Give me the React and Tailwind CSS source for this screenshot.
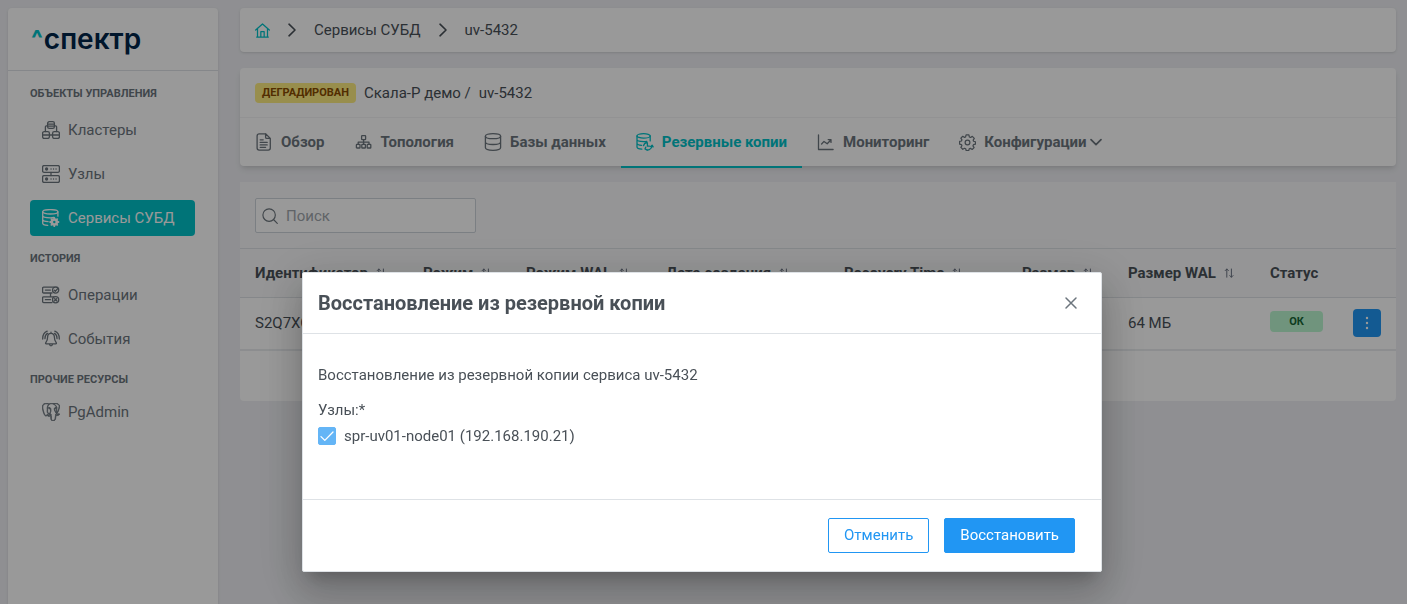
import React, { useState } from 'react';
import { SiPostgresql } from 'react-icons/si';

const Icon = ({ children, box = 18, className = 'size-[18px]' }) => (
  <svg
    viewBox={`0 0 ${box} ${box}`}
    className={`${className} shrink-0`}
    fill="none"
    stroke="currentColor"
    strokeWidth="1.3"
    strokeLinecap="round"
    strokeLinejoin="round"
    aria-hidden="true"
  >
    {children}
  </svg>
);

const ClusterIcon = () => (
  <Icon>
    <rect x="5.6" y="0.7" width="6.8" height="6.6" rx="1.6" />
    <path d="M5.6 3.2h6.8M5.6 5.2h6.8" />
    <rect x="0.6" y="10.6" width="6.8" height="6.8" rx="1.6" />
    <rect x="10.6" y="10.6" width="6.8" height="6.8" rx="1.6" />
    <path d="M0.6 14h16.8M5.6 4.8H4.4c-.8 0-1 .5-1 1v4.8M12.4 4.8h1.2c.8 0 1 .5 1 1v4.8" />
  </Icon>
);

const NodesIcon = () => (
  <Icon>
    <rect x="0.6" y="0.6" width="16.8" height="6.8" rx="1.4" />
    <rect x="0.6" y="10.6" width="16.8" height="6.8" rx="1.4" />
    <path d="M9 7.4v3.2M9 4h.1M11.5 4h.1M14 4h.1M9 14h.1M11.5 14h.1M14 14h.1" />
    <circle cx="4.6" cy="4" r="1" fill="currentColor" />
    <circle cx="4.6" cy="14" r="1" fill="currentColor" />
  </Icon>
);

const ServiceIcon = () => (
  <Icon>
    <ellipse cx="8.3" cy="2.8" rx="7.6" ry="2.2" />
    <path d="M.7 2.8v11.4c0 1.2 2 2 5 2.2M15.9 2.8v4.4M.7 6.6c0 1.3 3.3 2.2 7.6 2.2 1.4 0 2.6-.1 3.7-.3M.7 10.4c0 1.2 2.2 2 5.4 2.2" />
    <circle cx="12.3" cy="13" r="2.5" strokeWidth="2.6" />
    <path
      d="M12.3 8.8v1.6M12.3 15.6v1.6M8.1 13h1.6M14.9 13h1.6M9.4 10.1l1.1 1.1M14.1 14.8l1.1 1.1M9.4 15.9l1.1-1.1M14.1 11.2l1.1-1.1"
      strokeWidth="1.8"
    />
  </Icon>
);

const OperationsIcon = () => (
  <Icon>
    <path d="M10 7H1.6c-.6 0-1-.4-1-1V2.200c0-.6.4-1 1-1H12M10 16.600H1.600c-.6 0-1-.4-1-1v-3.800c0-.6.4-1 1-1H12M3.400 4.100h5M3.400 13.700h5M8.500 7v3.800" />
    <circle cx="13.6" cy="4.1" r="3.1" />
    <circle cx="13.6" cy="13.7" r="3.1" />
    <path d="M12.3 4.2l1 1 2.4-2.600M12.600 12.700l2 2M14.600 12.700l-2 2" />
  </Icon>
);

const EventsIcon = () => (
  <Icon>
    <path d="M9 3.4c-2.3 0-3.4 1.7-3.4 3.8 0 3.4-1.2 4.600-1.900 5.600-.3.500-.1 1 .5 1h9.600c.6 0 .8-.5.5-1-.7-1-1.900-2.200-1.900-5.600 0-2.100-1.100-3.800-3.400-3.800zM9 3.400V2.200M7.400 14c.2 1.200.8 1.800 1.600 1.800s1.400-.6 1.600-1.800" />
    <path d="M5.200 1.200C2.400 2.300.6 5 .7 9M5.400 3.400C3.700 4.400 2.900 6.200 3 8.600M12.800 1.200c2.800 1.100 4.600 3.800 4.500 7.800M12.600 3.400c1.700 1 2.500 2.800 2.400 5.200" />
  </Icon>
);

const DocIcon = () => (
  <Icon>
    <path d="M10.600.8H4.200C2.900.8 2.100 1.600 2.100 2.900v12.200c0 1.300.8 2.100 2.100 2.100h9c1.300 0 2.100-.8 2.100-2.100V5.400L10.600.8v3.400c0 .8.4 1.200 1.200 1.200h3.500M5.200 6.800h3M5.200 9.400h7M5.200 11.900h7M5.200 14.300h5.400" />
  </Icon>
);

const TopologyIcon = () => (
  <Icon>
    <rect x="6.6" y="2.6" width="4" height="4" rx=".6" />
    <rect x="1.4" y="11.4" width="3.6" height="3.6" rx=".6" />
    <rect x="6.8" y="11.4" width="3.6" height="3.6" rx=".6" />
    <rect x="12.2" y="11.4" width="3.6" height="3.6" rx=".6" />
    <path d="M8.6 6.6v4.8M3.2 11.4V9.2H14v2.2" />
  </Icon>
);

const DatabaseIcon = () => (
  <Icon>
    <ellipse cx="9" cy="3.2" rx="7.6" ry="2.5" />
    <path d="M1.4 3.2v11.4c0 1.500 3.300 2.700 7.600 2.700s7.600-1.200 7.600-2.700V3.200M1.400 9c0 1.400 3.300 2.500 7.600 2.500s7.600-1.100 7.600-2.500" />
  </Icon>
);

const BackupIcon = () => (
  <Icon>
    <ellipse cx="7.6" cy="2.9" rx="6.6" ry="2.2" />
    <path d="M1 2.900v11c0 1.200 2 2 4.800 2.200M14.200 2.900v5M1 6.600c0 1.200 2.800 2.100 6.600 2.100 1.200 0 2.300-.1 3.200-.3M1 10.200c0 1.100 1.900 1.900 4.700 2.100" />
    <path d="M7.600 12.600a4.100 4.100 0 0 1 3.600-3.100M16 12.800a4.200 4.200 0 0 1-6.800 3.200M11.400 10.200v3h2M14.500 13.600l1.600-1.500 1 1.800M11.200 17.300L9 16l.8-1.900" />
  </Icon>
);

const MonitoringIcon = () => (
  <Icon>
    <path d="M1.500 2v14.500h14.600M4.600 11l2.400-2.600 3.200 2.400 3.600-3.800M11.200 6.600h2.800v2.800" />
  </Icon>
);

const GearIcon = () => (
  <Icon className="size-[17px]">
    <circle cx="9" cy="9" r="2.5" />
    <path d="M7.500 1h3l.5 2.200 1.200.5 1.900-1.200 2.100 2.100L15 6.500l.4 1.200 2 .5v2.600l-2.100.5-.5 1.200 1.200 1.900-2.100 2-1.800-1.200-1.300.5-.5 1.900H7.600l-.5-2-1.200-.5L4 16.200l-2-2 1.100-1.800-.5-1.200-2-.5V7.900l2-.5.5-1.200L2 4.400l2-2 1.900 1.200 1.100-.5z" />
  </Icon>
);

const SearchIcon = () => (
  <Icon className="size-4">
    <circle cx="8" cy="8" r="7" />
    <path d="M13.2 13.2l4 4" />
  </Icon>
);

const HomeIcon = () => (
  <Icon className="size-[15px]">
    <path d="M.8 8.4L9 1.200l8.200 7.200M3 7v9.800h12V7M7 16.600V10.400h4v6.200M2 16.800h14" strokeWidth="1.5" />
  </Icon>
);

const ChevronRight = () => (
  <Icon box={14} className="size-3.5">
    <path d="M4 1.200L10 7l-6 5.800" strokeWidth="1.6" />
  </Icon>
);

const ChevronDown = () => (
  <Icon box={14} className="size-3.5">
    <path d="M2 4.600L7 9.600l5-5" strokeWidth="1.7" />
  </Icon>
);

const SortIcon = () => (
  <Icon box={10} className="size-2.5 text-gray-500">
    <path d="M2.800 9.200V1M1.200 2.600L2.800 1l1.600 1.600M7.400 1v8.200M5.800 7.600l1.600 1.600L9 7.600" strokeWidth="1" />
  </Icon>
);

const PgAdminIcon = () => (
  <SiPostgresql className="size-[18px] shrink-0 stroke-current stroke-1" aria-hidden="true" />
);

const menu = [
  {
    title: 'Объекты управления',
    items: [
      { label: 'Кластеры', icon: <ClusterIcon /> },
      { label: 'Узлы', icon: <NodesIcon /> },
      { label: 'Сервисы СУБД', icon: <ServiceIcon />, active: true },
    ],
  },
  {
    title: 'История',
    items: [
      { label: 'Операции', icon: <OperationsIcon /> },
      { label: 'События', icon: <EventsIcon /> },
    ],
  },
  {
    title: 'Прочие ресурсы',
    compact: true,
    items: [{ label: 'PgAdmin', icon: <PgAdminIcon /> }],
  },
];

const tabs = [
  { label: 'Обзор', icon: <DocIcon /> },
  { label: 'Топология', icon: <TopologyIcon /> },
  { label: 'Базы данных', icon: <DatabaseIcon /> },
  { label: 'Резервные копии', icon: <BackupIcon />, active: true },
  { label: 'Мониторинг', icon: <MonitoringIcon /> },
  { label: 'Конфигурации', icon: <GearIcon />, dropdown: true },
];

const columns = [
  { label: 'Идентификатор', width: 'w-[168px]' },
  { label: 'Режим', width: 'w-[103px]' },
  { label: 'Режим WAL', width: 'w-[140px]' },
  { label: 'Дата создания', width: 'w-[178px]' },
  { label: 'Recovery Time', width: 'w-[178px]' },
  { label: 'Размер', width: 'w-[106px]' },
  { label: 'Размер WAL', width: 'w-[142px]' },
];

const Sidebar = () => (
  <aside className="w-[210px] shrink-0 rounded-t bg-white shadow-sm">
    <a href="#" className="flex h-[63px] items-center gap-px border-b border-[#dee2e6] pl-[23px] font-['Inter',sans-serif]">
      <span className="text-2xl leading-8 font-extrabold text-[#00c2c9]">^</span>
      <span className="text-[28px] leading-8 font-semibold text-[#00254a]">спектр</span>
    </a>
    <nav className="flex flex-col gap-[11px] pt-[11px] pr-[23px] pl-[22px]">
      {menu.map((group) => (
        <div key={group.title}>
          <h2 className="py-1 text-[11px] leading-4 font-bold text-[#6c757d] uppercase">{group.title}</h2>
          <ul className={group.compact ? 'flex flex-col gap-2 pt-0.5' : 'flex flex-col gap-2 pt-1.5'}>
            {group.items.map((item) => (
              <li key={item.label}>
                <a
                  href="#"
                  className={
                    item.active
                      ? 'flex h-9 items-center gap-2 rounded bg-[#00c2c9] px-3 text-white'
                      : 'flex h-9 items-center gap-2 rounded px-3 text-[#6c757d]'
                  }
                >
                  {item.icon}
                  {item.label}
                </a>
              </li>
            ))}
          </ul>
        </div>
      ))}
    </nav>
  </aside>
);

const Breadcrumbs = () => (
  <nav className="flex h-11 items-center gap-[15px] rounded bg-white px-[15px] shadow-sm">
    <a href="#" aria-label="Главная" className="text-[#00c2c9]">
      <HomeIcon />
    </a>
    <ChevronRight />
    <a href="#">Сервисы СУБД</a>
    <ChevronRight />
    <span>uv-5432</span>
  </nav>
);

const ServiceHeader = () => (
  <section className="rounded bg-white shadow-md">
    <div className="flex h-[50px] items-center gap-2 border-b border-gray-100 px-[15px]">
      <span className="rounded bg-[#feed80] px-[7px] text-[11px] leading-5 font-bold text-[#894b00] uppercase">
        Деградирован
      </span>
      <span>Скала-Р демо /</span>
      <span>uv-5432</span>
    </div>
    <div className="flex h-12">
      {tabs.map((tab) => (
        <button
          key={tab.label}
          type="button"
          className={
            tab.active
              ? '-mb-0.5 flex items-center gap-2 border-b-2 border-[#00c2c9] px-[15px] font-bold whitespace-nowrap text-[#00c2c9]'
              : 'flex items-center gap-2 px-[15px] font-bold whitespace-nowrap text-[#6c757d]'
          }
        >
          {tab.icon}
          <span className="flex items-center gap-0.5">
            {tab.label}
            {tab.dropdown && <ChevronDown />}
          </span>
        </button>
      ))}
    </div>
  </section>
);

const BackupsTable = () => (
  <section>
    <div className="bg-[#f8f9fa] px-[15px] pt-4 pb-[15px]">
      <label className="flex h-[35px] w-[221px] items-center gap-2 rounded-xs border border-[#ced4da] bg-white px-1.5 text-[#6c757d]">
        <SearchIcon />
        <input
          type="search"
          placeholder="Поиск"
          aria-label="Поиск"
          className="w-full min-w-0 bg-transparent outline-none placeholder:text-[#a0a6ac]"
        />
      </label>
    </div>
    <table className="w-full table-fixed bg-white text-left">
      <thead>
        <tr className="h-[49px] border-y border-[#dee2e6] bg-[#f8f9fa]">
          {columns.map((col) => (
            <th key={col.label} className={`${col.width} pl-[15px] font-bold whitespace-nowrap`}>
              <span className="flex items-center gap-2">
                {col.label}
                <SortIcon />
              </span>
            </th>
          ))}
          <th className="pl-[15px] font-bold">Статус</th>
          <th className="w-[58px]" aria-label="Действия" />
        </tr>
      </thead>
      <tbody>
        <tr className="h-[52px] border-b-2 border-[#e9ecef]">
          <td className="pl-[15px]">S2Q7XC</td>
          <td />
          <td />
          <td />
          <td />
          <td />
          <td className="pl-[15px]">64 МБ</td>
          <td className="pb-1 pl-[15px]">
            <span className="inline-block w-[53px] rounded bg-[#bbf7d0] text-center text-[11px] leading-[21px] font-bold text-[#166534]">
              ОК
            </span>
          </td>
          <td className="pl-[15px]">
            <button
              type="button"
              aria-label="Меню"
              className="flex size-7 items-center justify-center rounded bg-[#2196f3] text-white"
            >
              <svg viewBox="0 0 14 14" className="size-3.5" fill="currentColor" aria-hidden="true">
                <circle cx="7" cy="2" r="1.2" />
                <circle cx="7" cy="7" r="1.2" />
                <circle cx="7" cy="12" r="1.2" />
              </svg>
            </button>
          </td>
        </tr>
      </tbody>
    </table>
    <div className="h-[50px] rounded-b bg-white" />
  </section>
);

const RestoreDialog = ({ onClose }) => {
  const [checked, setChecked] = useState(true);

  return (
    <div className="fixed inset-0 flex items-end justify-center bg-black/40 pr-[3px] pb-8">
      <div
        role="dialog"
        aria-modal="true"
        aria-labelledby="restore-title"
        className="w-[800px] max-w-full rounded-xs border border-[#dee2e6] bg-white shadow-[0_11px_15px_-7px_rgba(0,0,0,0.2),0_24px_38px_3px_rgba(0,0,0,0.14),0_9px_46px_8px_rgba(0,0,0,0.12)]"
      >
        <header className="flex h-[61px] items-center justify-between border-b border-[#dee2e6] px-[15px]">
          <h1 id="restore-title" className="text-xl font-bold">Восстановление из резервной копии</h1>
          <button
            type="button"
            aria-label="Закрыть"
            onClick={onClose}
            className="flex size-[30px] items-center justify-center text-[#6c757d]"
          >
            <Icon box={14} className="size-3.5">
              <path d="M2 2l10 10M12 2l-10 10" strokeWidth="1.5" />
            </Icon>
          </button>
        </header>
        <div className="flex h-[165px] flex-col px-[15px] pt-[30px]">
          <p className="leading-[22px]">Восстановление из резервной копии сервиса uv-5432</p>
          <fieldset className="pt-[13px]">
            <legend className="contents leading-[22px]">Узлы:*</legend>
            <label className="flex items-center gap-2 pt-1 leading-[22px]">
              <span className="relative size-[18px]">
                <input
                  type="checkbox"
                  checked={checked}
                  onChange={(e) => setChecked(e.target.checked)}
                  className="block size-[18px] appearance-none rounded-xs border border-[#64b5f6] checked:bg-[#64b5f6]"
                />
                {checked && (
                  <span className="pointer-events-none absolute inset-0 flex items-center justify-center text-white">
                    <Icon box={14} className="size-3.5">
                      <path d="M1 7.600l3.800 3.800L13 3" />
                    </Icon>
                  </span>
                )}
              </span>
              spr-uv01-node01 (192.168.190.21)
            </label>
          </fieldset>
        </div>
        <footer className="flex h-[72px] items-center justify-end gap-[15px] border-t border-[#dee2e6] pr-[26px]">
          <button
            type="button"
            onClick={onClose}
            className="h-[35px] rounded-xs border border-[#2196f3] px-[15px] pb-px text-[#2196f3]"
          >
            Отменить
          </button>
          <button
            type="button"
            className="h-[35px] rounded-xs border border-[#2196f3] bg-[#2196f3] px-[15px] pb-px text-white"
          >
            Восстановить
          </button>
        </footer>
      </div>
    </div>
  );
};

const App = () => {
  const [open, setOpen] = useState(true);

  return (
    <div className="flex min-h-screen gap-[22px] bg-[#eeeff3] pt-2 pr-[11px] pl-2 font-['Roboto',sans-serif] text-[15px] leading-5 text-[#495057]">
      <Sidebar />
      <main className="flex min-w-0 flex-1 flex-col gap-4">
        <Breadcrumbs />
        <ServiceHeader />
        <BackupsTable />
      </main>
      {open && <RestoreDialog onClose={() => setOpen(false)} />}
    </div>
  );
};

export default App;
